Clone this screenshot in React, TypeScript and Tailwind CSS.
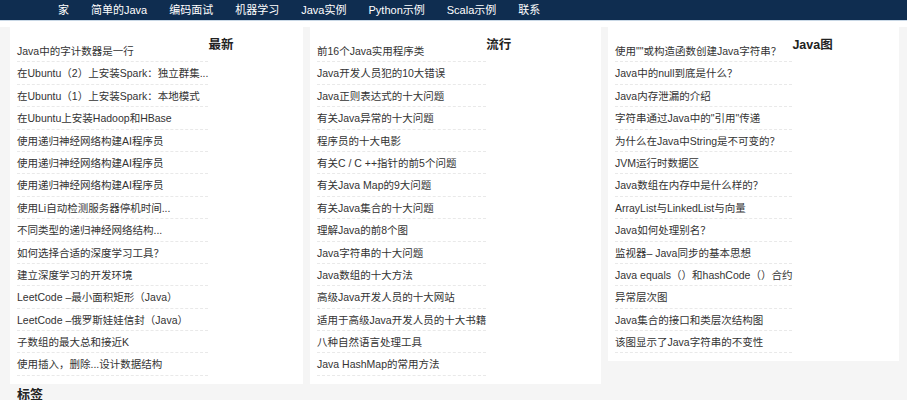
import React from "react";

const navItems = ["家", "简单的Java", "编码面试", "机器学习", "Java实例", "Python示例", "Scala示例", "联系"];

const columns: { title: string; width: string; items: string[] }[] = [
  {
    title: "最新",
    width: "w-[293px]",
    items: [
      "Java中的字计数器是一行",
      "在Ubuntu（2）上安装Spark：独立群集...",
      "在Ubuntu（1）上安装Spark：本地模式",
      "在Ubuntu上安装Hadoop和HBase",
      "使用递归神经网络构建AI程序员",
      "使用递归神经网络构建AI程序员",
      "使用递归神经网络构建AI程序员",
      "使用Li自动检测服务器停机时间...",
      "不同类型的递归神经网络结构...",
      "如何选择合适的深度学习工具？",
      "建立深度学习的开发环境",
      "LeetCode –最小面积矩形（Java）",
      "LeetCode –俄罗斯娃娃信封（Java）",
      "子数组的最大总和接近K",
      "使用插入，删除...设计数据结构",
    ],
  },
  {
    title: "流行",
    width: "w-[291px]",
    items: [
      "前16个Java实用程序类",
      "Java开发人员犯的10大错误",
      "Java正则表达式的十大问题",
      "有关Java异常的十大问题",
      "程序员的十大电影",
      "有关C / C ++指针的前5个问题",
      "有关Java Map的9大问题",
      "有关Java集合的十大问题",
      "理解Java的前8个图",
      "Java字符串的十大问题",
      "Java数组的十大方法",
      "高级Java开发人员的十大网站",
      "适用于高级Java开发人员的十大书籍",
      "八种自然语言处理工具",
      "Java HashMap的常用方法",
    ],
  },
  {
    title: "Java图",
    width: "w-[291px]",
    items: [
      "使用\"\"或构造函数创建Java字符串？",
      "Java中的null到底是什么？",
      "Java内存泄漏的介绍",
      "字符串通过Java中的\"引用\"传递",
      "为什么在Java中String是不可变的？",
      "JVM运行时数据区",
      "Java数组在内存中是什么样的？",
      "ArrayList与LinkedList与向量",
      "Java如何处理别名？",
      "监视器– Java同步的基本思想",
      "Java equals（）和hashCode（）合约",
      "异常层次图",
      "Java集合的接口和类层次结构图",
      "该图显示了Java字符串的不变性",
    ],
  },
];

export default function App() {
  return (
    <div className="w-[907px] h-[400px] overflow-hidden bg-[#f5f5f5] font-['Liberation_Sans','Noto_Sans_CJK_SC',sans-serif]">
      {/* top nav */}
      <nav className="h-[21px] bg-[#0f2d50] border-b border-[#c9d8e6] flex items-center pl-[58px] gap-[22px] text-white text-[11px]">
        {navItems.map((n) => (
          <span key={n}>{n}</span>
        ))}
      </nav>
      <div className="h-[6px] bg-white" />

      <div className="flex items-start gap-[7px] pl-[10px]">
        {columns.map((col) => (
          <div key={col.title} className={`${col.width} bg-white pl-[7px] pb-[8px] flex items-start`}>
            <ul className="pt-[13px] whitespace-nowrap">
              {col.items.map((it, i) => (
                <li
                  key={i}
                  className="h-[22.4px] leading-[23px] border-b border-dashed border-[#e9e9e9] text-[10.5px] text-[#333]"
                >
                  {it}
                </li>
              ))}
            </ul>
            <h3 className="pt-[11px] text-[12.5px] leading-[15px] font-bold text-[#222]">{col.title}</h3>
          </div>
        ))}
      </div>

      <h2 className="pl-[17px] mt-[3px] text-[13px] leading-[16px] font-bold text-[#222]">标签</h2>
    </div>
  );
}
